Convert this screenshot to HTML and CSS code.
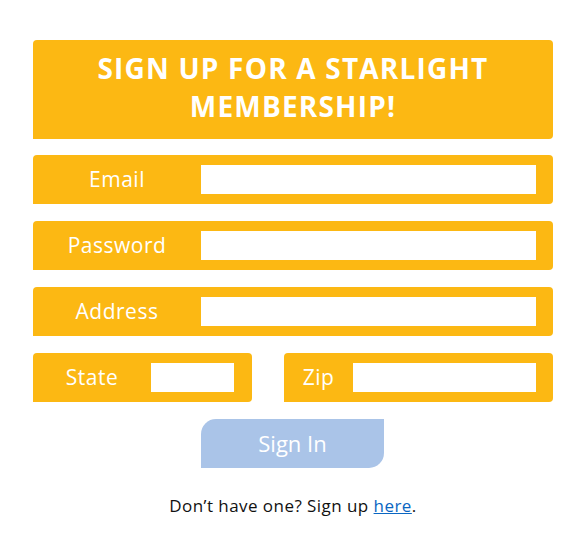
FILE: index.html
```html
<!DOCTYPE html>
<html>
<head>
<meta charset="utf-8">
<link rel="stylesheet" href="styles.css">
</head>
<body>
<div class="page">
  <div class="header">SIGN UP FOR A STARLIGHT<br>MEMBERSHIP!</div>
  <div class="row"><span class="label">Email</span><span class="input"></span></div>
  <div class="row"><span class="label">Password</span><span class="input"></span></div>
  <div class="row"><span class="label">Address</span><span class="input"></span></div>
  <div class="split">
    <div class="row state"><span class="label">State</span><span class="input"></span></div>
    <div class="row zip"><span class="label">Zip</span><span class="input"></span></div>
  </div>
  <div class="btn">Sign In</div>
  <p class="footer">Don’t have one? Sign up <a href="#">here</a>.</p>
</div>
</body>
</html>
```
FILE: styles.css
```css
html, body { margin: 0; padding: 0; background: #fff; }
body { font-family: "Open Sans", "Noto Sans", sans-serif; }
.page { width: 520px; margin-left: 33px; padding-top: 40px; }
.header {
  background: #fcb813;
  height: 99px;
  border-radius: 4px 4px 4px 0;
  color: #fff;
  font-weight: 700;
  font-size: 28px;
  line-height: 38px;
  letter-spacing: 1.2px;
  text-align: center;
  box-sizing: border-box;
  padding-top: 9px;
}
.row {
  display: flex;
  align-items: center;
  height: 49px;
  margin-top: 17px;
  background: #fcb813;
  border-radius: 4px 4px 4px 0;
}
.header + .row { margin-top: 16px; }
.label {
  width: 168px;
  text-align: center;
  color: #fff;
  font-size: 21px;
  letter-spacing: 0.5px;
  padding-bottom: 2px;
}
.input {
  width: 335px;
  height: 29px;
  background: #fff;
}
.split { display: flex; gap: 32px; margin-top: 17px; }
.split .row { margin-top: 0; }
.state { width: 219px; }
.state .label { width: 118px; }
.state .input { width: 83px; }
.zip { width: 269px; }
.zip .label { width: 69px; }
.zip .input { width: 183px; }
.btn {
  margin: 17px 0 0 168px;
  width: 183px;
  height: 49px;
  background: #aac4e8;
  border-radius: 15px 0 15px 0;
  color: #fff;
  font-size: 22px;
  line-height: 49px;
  text-align: center;
}
.footer {
  margin: 26px 0 0 0;
  text-align: center;
  font-size: 17px;
  letter-spacing: 0.45px;
  color: #111;
}
.footer a { color: #0a66c2; }
```
